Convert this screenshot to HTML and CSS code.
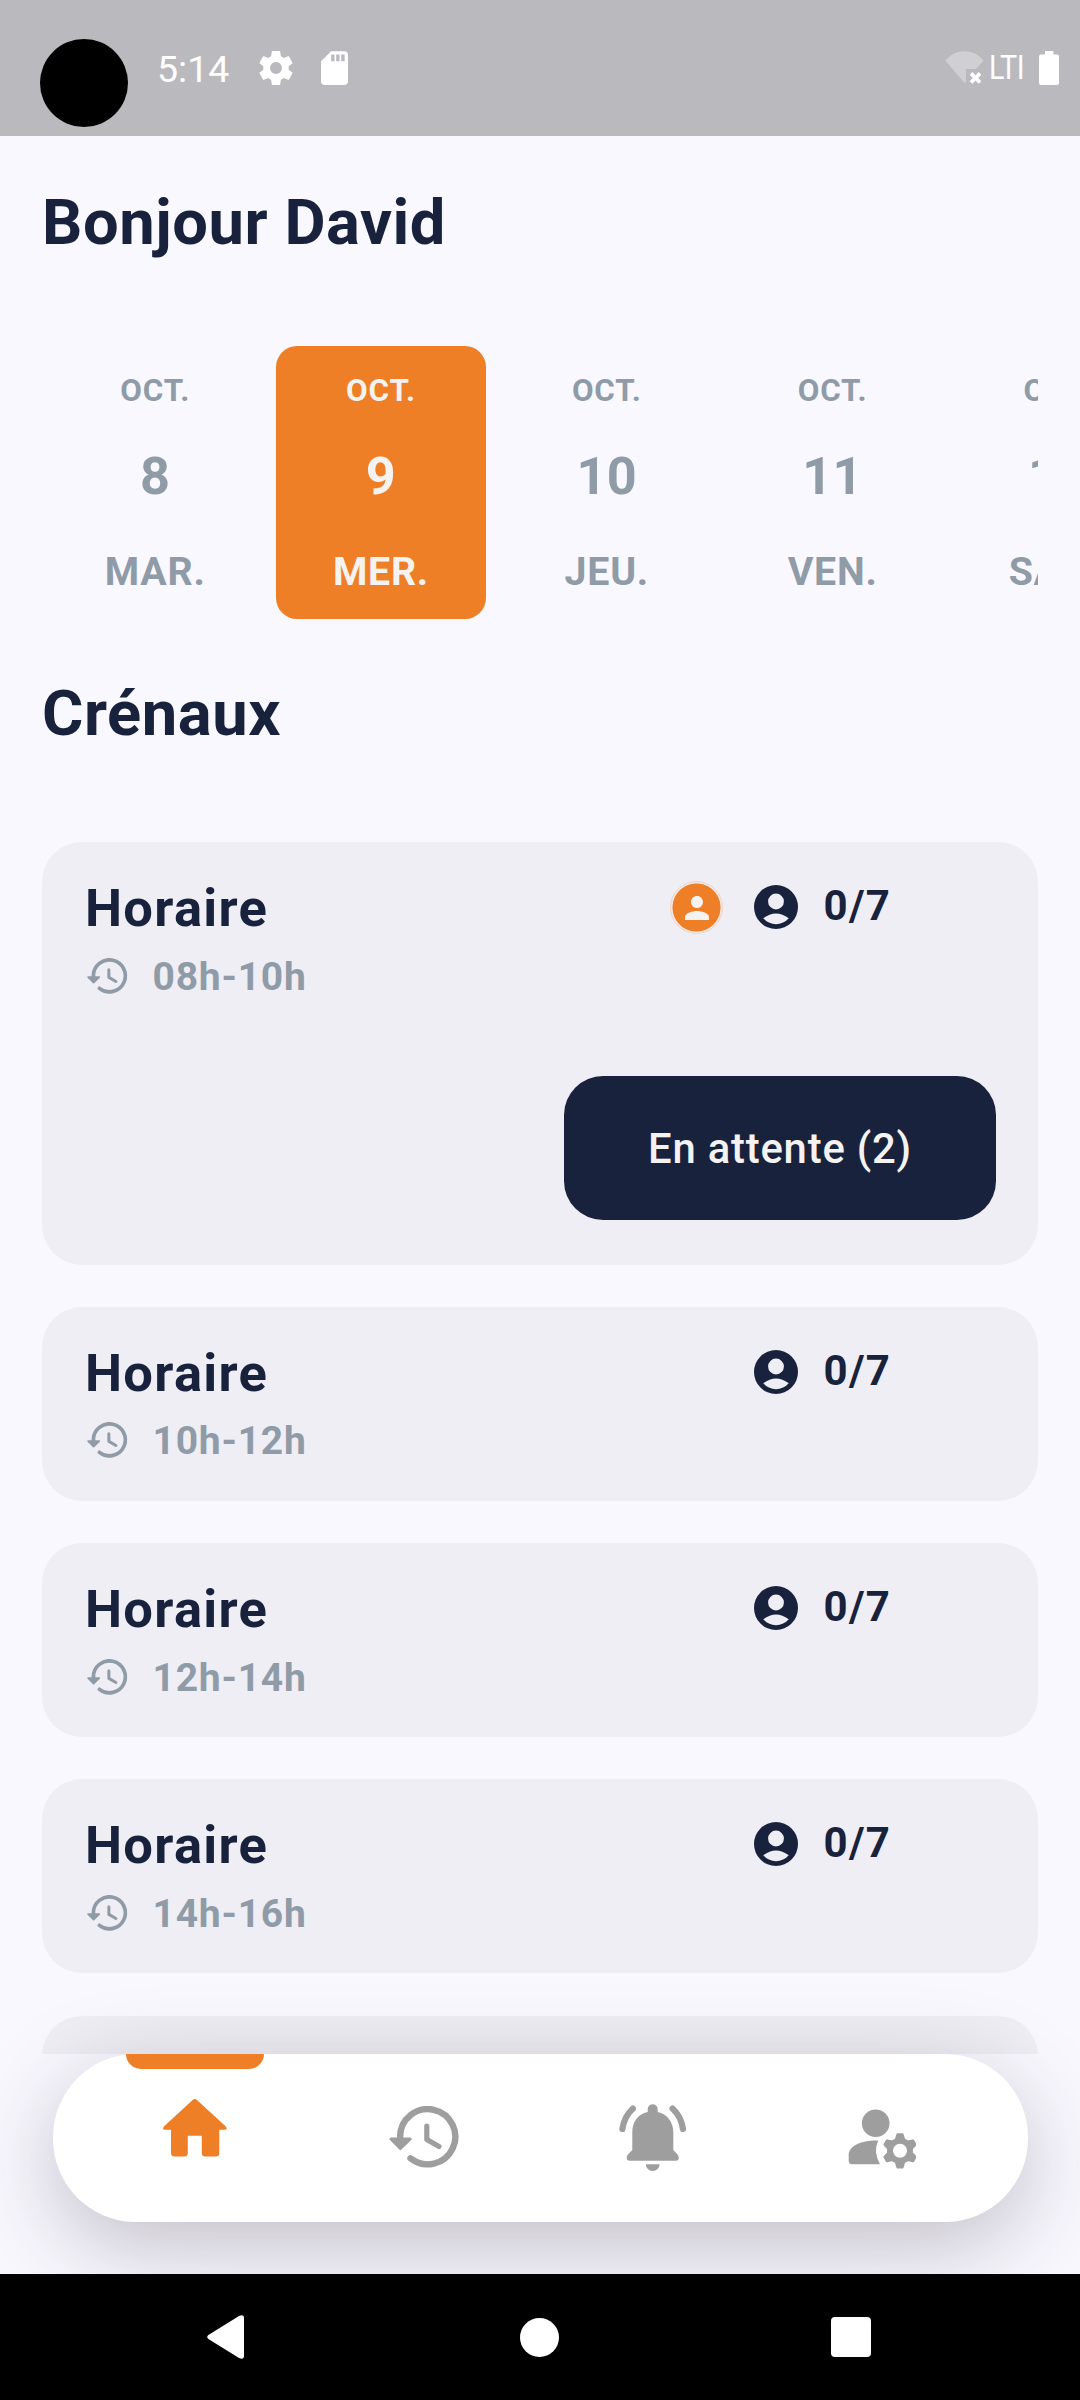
FILE: index.html
```html
<!DOCTYPE html>
<html lang="fr">
<head>
<meta charset="utf-8">
<title>Bonjour David</title>
<link rel="stylesheet" href="styles.css">
</head>
<body>
<svg class="defs" aria-hidden="true">
  <symbol id="history" viewBox="0 0 70 62">
    <path d="M11.1 33V30.9A27.6 27.6 0 1 1 21.5 52.3" fill="none" stroke="currentColor" stroke-width="6.4" stroke-linecap="round"/>
    <path d="M2 33H21.2L11.4 42.5Z" fill="currentColor" stroke="currentColor" stroke-width="3" stroke-linejoin="round"/>
    <path d="M37.8 20.2V33.4L50 40.4" fill="none" stroke="currentColor" stroke-width="5.2" stroke-linecap="round" stroke-linejoin="round"/>
  </symbol>
  <symbol id="account" viewBox="2 2 20 20">
    <path fill="currentColor" fill-rule="evenodd" d="M12 2a10 10 0 1 0 0 20a10 10 0 1 0 0-20ZM12 5.9a3.6 3.6 0 1 1 0 7.2a3.6 3.6 0 1 1 0-7.2ZM6.2 17.1Q12 12.8 17.8 17.1A7.6 7.6 0 0 1 6.2 17.1Z"/>
  </symbol>
</svg>
<div class="phone">
  <header class="status">
    <span class="camera"></span>
    <span class="clock">5:14</span>
    <svg class="st-gear" viewBox="2 2 20 20"><path fill="#fff" d="M19.43 12.98c.04-.32.07-.64.07-.98s-.03-.66-.07-.98l2.11-1.65c.19-.15.24-.42.12-.64l-2-3.46c-.12-.22-.39-.3-.61-.22l-2.49 1c-.52-.4-1.08-.73-1.69-.98l-.38-2.65C14.46 2.18 14.25 2 14 2h-4c-.25 0-.46.18-.49.42l-.38 2.65c-.61.25-1.17.59-1.69.98l-2.49-1c-.23-.09-.49 0-.61.22l-2 3.46c-.13.22-.07.49.12.64l2.11 1.65c-.04.32-.07.65-.07.98s.03.66.07.98l-2.11 1.65c-.19.15-.24.42-.12.64l2 3.46c.12.22.39.3.61.22l2.49-1c.52.4 1.08.73 1.69.98l.38 2.65c.03.24.24.42.49.42h4c.25 0 .46-.18.49-.42l.38-2.65c.61-.25 1.17-.59 1.69-.98l2.49 1c.23.09.49 0 .61-.22l2-3.46c.12-.22.07-.49-.12-.64l-2.11-1.65zM12 15.5c-1.93 0-3.5-1.57-3.5-3.5s1.57-3.5 3.5-3.5 3.5 1.57 3.5 3.5-1.57 3.5-3.5 3.5z"/></svg>
    <svg class="st-sd" viewBox="4 2 16 20"><path fill="#fff" d="M18 2h-8L4.02 8 4 20c0 1.1.9 2 2 2h12c1.1 0 2-.9 2-2V4c0-1.1-.9-2-2-2zm-6 6h-2V4h2v4zm3 0h-2V4h2v4zm3 0h-2V4h2v4z"/></svg>
    <svg class="st-wifi" viewBox="0 0 39 34"><path fill="#d0cfd3" d="M.3 9.5Q8 .3 19.5.3T38.7 9.5L31 18H21V31Q20 33 18.6 31Z"/><path d="M26 22.3L35 31.5M35 22.3L26 31.5" stroke="#fff" stroke-width="3.8"/></svg>
    <span class="network">LTI</span>
    <svg class="st-battery" viewBox="0 0 20 34"><path fill="#fff" d="M6 0H14.3V3.4H18Q20 3.4 20 5.4V32Q20 34 18 34H2Q0 34 0 32V5.4Q0 3.4 2 3.4H6Z"/></svg>
  </header>

  <main class="content">
    <h1 class="title">Bonjour David</h1>
    <div class="days">
      <div class="day"><span class="month">OCT.</span><span class="num">8</span><span class="name">MAR.</span></div>
      <div class="day day-on"><span class="month">OCT.</span><span class="num">9</span><span class="name">MER.</span></div>
      <div class="day"><span class="month">OCT.</span><span class="num">10</span><span class="name">JEU.</span></div>
      <div class="day"><span class="month">OCT.</span><span class="num">11</span><span class="name">VEN.</span></div>
      <div class="day"><span class="month">OCT.</span><span class="num">12</span><span class="name">SAM.</span></div>
    </div>
    <h2 class="title title-slots">Crénaux</h2>
    <div class="slots">
      <section class="slot slot-open">
        <div class="row">
          <h3 class="label">Horaire</h3>
          <span class="badge"><svg viewBox="4 4 16 16"><path fill="#f5f3f2" d="M12 12c2.21 0 4-1.79 4-4s-1.79-4-4-4-4 1.79-4 4 1.79 4 4 4zm0 2c-2.67 0-8 1.34-8 4v2h16v-2c0-2.66-5.33-4-8-4z"/></svg></span>
          <div class="count"><svg class="account"><use href="#account"/></svg><span>0/7</span></div>
        </div>
        <div class="time"><svg class="time-icon"><use href="#history"/></svg><span>08h-10h</span></div>
        <button class="pending">En attente (2)</button>
      </section>
      <section class="slot">
        <div class="row">
          <h3 class="label">Horaire</h3>
          <div class="count"><svg class="account"><use href="#account"/></svg><span>0/7</span></div>
        </div>
        <div class="time"><svg class="time-icon"><use href="#history"/></svg><span>10h-12h</span></div>
      </section>
      <section class="slot">
        <div class="row">
          <h3 class="label">Horaire</h3>
          <div class="count"><svg class="account"><use href="#account"/></svg><span>0/7</span></div>
        </div>
        <div class="time"><svg class="time-icon"><use href="#history"/></svg><span>12h-14h</span></div>
      </section>
      <section class="slot">
        <div class="row">
          <h3 class="label">Horaire</h3>
          <div class="count"><svg class="account"><use href="#account"/></svg><span>0/7</span></div>
        </div>
        <div class="time"><svg class="time-icon"><use href="#history"/></svg><span>14h-16h</span></div>
      </section>
      <section class="slot"></section>
    </div>
  </main>

  <div class="dock">
    <nav class="tabs">
      <a class="tab tab-on"><svg class="i-home" viewBox="0 0 64 58"><path fill="currentColor" d="M29.6 1Q31.8-.9 34 1L62.8 27.4Q65 30.5 62 30.7H56.3V54Q56.3 57.5 52.8 57.5H42.2Q38.8 57.5 38.8 54V36.7H24.8V54Q24.8 57.5 21.3 57.5H11.5Q8 57.5 8 54V30.7H1.8Q-1 30.5 .9 27.4Z"/></svg></a>
      <a class="tab"><svg class="i-history"><use href="#history"/></svg></a>
      <a class="tab"><svg class="i-bell" viewBox="0 0 68 67"><path fill="currentColor" d="M28.7 8V5.2a5 5 0 0 1 10 0V8C48 10 54.3 18 54.3 28V46L59 51Q61.5 56.3 57 56.7H10.5Q6 56.3 8.5 51L13.3 46V28C13.3 18 19 10 28.7 8ZM26.8 60.3H40.6A6.9 6.6 0 0 1 26.8 60.3Z"/><path fill="none" stroke="currentColor" stroke-width="6.2" stroke-linecap="round" d="M13.9 4.6Q5 13 3.4 25M53.5 4.6Q62.4 13 64 25"/></svg></a>
      <a class="tab"><svg class="i-user" viewBox="0 0 68 60"><g fill="currentColor"><circle cx="27.7" cy="14.3" r="13.8"/><path d="M30.3 31.5Q24.8 42.5 32 55.2H4.2Q.7 55.2 .7 51.7V46C.7 36 15 31 30.3 31.5Z"/></g><g transform="translate(52 41.8)"><circle r="10" fill="none" stroke="currentColor" stroke-width="6"/><g fill="currentColor"><path id="tooth" d="M-5.4-10.6L-3.6-16.6Q-3.3-17.6-2.4-17.6H2.4Q3.3-17.6 3.6-16.6L5.4-10.6Z"/><use href="#tooth" transform="rotate(60)"/><use href="#tooth" transform="rotate(120)"/><use href="#tooth" transform="rotate(180)"/><use href="#tooth" transform="rotate(240)"/><use href="#tooth" transform="rotate(300)"/></g></g></svg></a>
    </nav>
  </div>

  <footer class="system">
    <svg class="s-back" viewBox="0 0 37 44"><path fill="#fff" d="M32 .9Q37-1.3 37 3.5V40.5Q37 45.3 32 43.1L1.4 24Q-1 22 1.4 20Z"/></svg>
    <span class="s-home"></span>
    <span class="s-recent"></span>
  </footer>
</div>
</body>
</html>
```
FILE: styles.css
```css
* { box-sizing: border-box; }
body {
  margin: 0;
  font-family: Roboto, "Liberation Sans", sans-serif;
  color: #19223d;
}
h1, h2, h3 { margin: 0; }
svg { display: block; flex: none; }
.defs { display: none; }

.phone {
  width: 1080px;
  height: 2400px;
  display: flex;
  flex-direction: column;
  background: #f9f8ff;
  overflow: hidden;
}

/* Status bar */
.status {
  flex: none;
  height: 136px;
  padding: 0 21px 0 40px;
  display: flex;
  align-items: center;
  background: #bab9be;
  color: #fff;
}
.camera {
  width: 88px;
  height: 88px;
  margin-top: 30px;
  border-radius: 50%;
  background: #000;
}
.clock {
  width: 73px;
  margin: 2px 29px 0;
  font-size: 37.5px;
  line-height: 44px;
}
.st-gear { width: 34px; height: 34px; }
.st-sd { width: 27px; height: 34px; margin-left: 27.5px; }
.st-wifi { width: 39px; height: 34px; margin-left: auto; }
.network {
  width: 50px;
  margin-left: 5px;
  font-size: 33px;
  line-height: 40px;
  transform: scaleX(.87);
  transform-origin: left;
  letter-spacing: -.6px;
}
.st-battery { width: 20px; height: 34px; }

/* Main content */
.content {
  flex: none;
  height: 1918px;
  padding: 46px 42px 0;
  overflow: hidden;
}
.title {
  font-size: 63.25px;
  line-height: 80px;
  font-weight: 700;
  letter-spacing: .55px;
}
.title-slots { margin-top: 54px; }

.days {
  margin-top: 84px;
  padding-left: 8.2px;
  display: flex;
  gap: 15.8px;
  overflow: hidden;
}
.day {
  flex: none;
  width: 210px;
  height: 273px;
  padding-top: 25px;
  display: flex;
  flex-direction: column;
  align-items: center;
  border-radius: 21px;
  color: #909ba8;
  font-weight: 700;
}
.day-on { background: #ee7f26; color: #f5f3f2; }
.month { font-size: 31.4px; line-height: 40px; letter-spacing: .8px; }
.num { margin-top: 36px; font-size: 52.25px; line-height: 60px; letter-spacing: .41px; }
.name { margin-top: 40px; font-size: 39.3px; line-height: 50px; letter-spacing: .75px; }

/* Time slots */
.slots {
  margin-top: 89px;
  display: flex;
  flex-direction: column;
  gap: 42.3px;
}
.slot {
  flex: none;
  height: 193.9px;
  padding: 34px 42px 0 43px;
  border-radius: 40px;
  background: #efeef4;
}
.slot-open { height: 422.7px; }
.row { height: 64px; display: flex; align-items: center; }
.label {
  margin-right: auto;
  font-size: 52.5px;
  line-height: 64px;
  font-weight: 700;
  letter-spacing: 1.3px;
}
.badge {
  width: 53px;
  height: 53px;
  margin: -1px 31px 0 0;
  display: flex;
  align-items: center;
  justify-content: center;
  border: 1px solid #f1d3c0;
  border-radius: 50%;
  background: radial-gradient(circle, #ee7f26 23.6px, #efeaee 24.4px);
}
.badge svg { width: 24px; height: 24px; }
.count {
  width: 242px;
  margin-top: -2px;
  display: flex;
  align-items: center;
  gap: 25.5px;
  font-size: 42px;
  line-height: 48px;
  font-weight: 700;
  letter-spacing: 1.3px;
}
.count span { margin-top: -2px; }
.account { width: 44px; height: 44px; }
.time {
  height: 48px;
  margin-top: 12.5px;
  display: flex;
  align-items: center;
  gap: 25px;
  color: #909ba8;
  font-size: 39px;
  line-height: 48px;
  font-weight: 700;
  letter-spacing: .8px;
}
.time-icon { width: 40.5px; height: 36px; margin: -2px 0 0 2px; }
.pending {
  display: block;
  width: 432px;
  height: 144px;
  margin: 75.5px 0 0 auto;
  padding: 1px 0 0;
  border: 0;
  border-radius: 39px;
  background: #19223d;
  color: #f5f3f2;
  font: 500 41.8px/48px Roboto, "Liberation Sans", sans-serif;
  letter-spacing: .8px;
}

/* Floating tab bar */
.dock {
  position: relative;
  flex: none;
  height: 220px;
  padding: 0 52.5px;
}
.tabs {
  height: 167.5px;
  padding: 0 28px;
  display: grid;
  grid-template-columns: repeat(4, 229px);
  border-radius: 83px;
  background: #fff;
  box-shadow: 0 25px 90px rgba(40, 28, 38, .26);
}
.tab {
  display: flex;
  flex-direction: column;
  align-items: center;
  color: #9e9e9e;
}
.tab-on { color: #ee7f26; }
.tab-on::before {
  content: "";
  width: 138px;
  height: 15.3px;
  margin-bottom: 29.7px;
  border-radius: 0 0 15px 15px;
  background: #ee7f26;
}
.i-home { width: 64px; height: 58px; }
.i-history { width: 70px; height: 62px; margin-top: 52px; }
.i-bell { width: 68px; height: 67px; margin-top: 50.3px; }
.i-user { width: 68px; height: 60px; margin-top: 55px; }

/* System navigation */
.system {
  position: relative;
  flex: 1;
  padding: 0 209px 0 207px;
  display: flex;
  align-items: center;
  justify-content: space-between;
  background: #000;
}
.s-back { width: 37px; height: 44px; }
.s-home { width: 39px; height: 39px; margin-left: 4px; border-radius: 50%; background: #fff; }
.s-recent { width: 40px; height: 40px; border-radius: 4px; background: #fff; }
```
